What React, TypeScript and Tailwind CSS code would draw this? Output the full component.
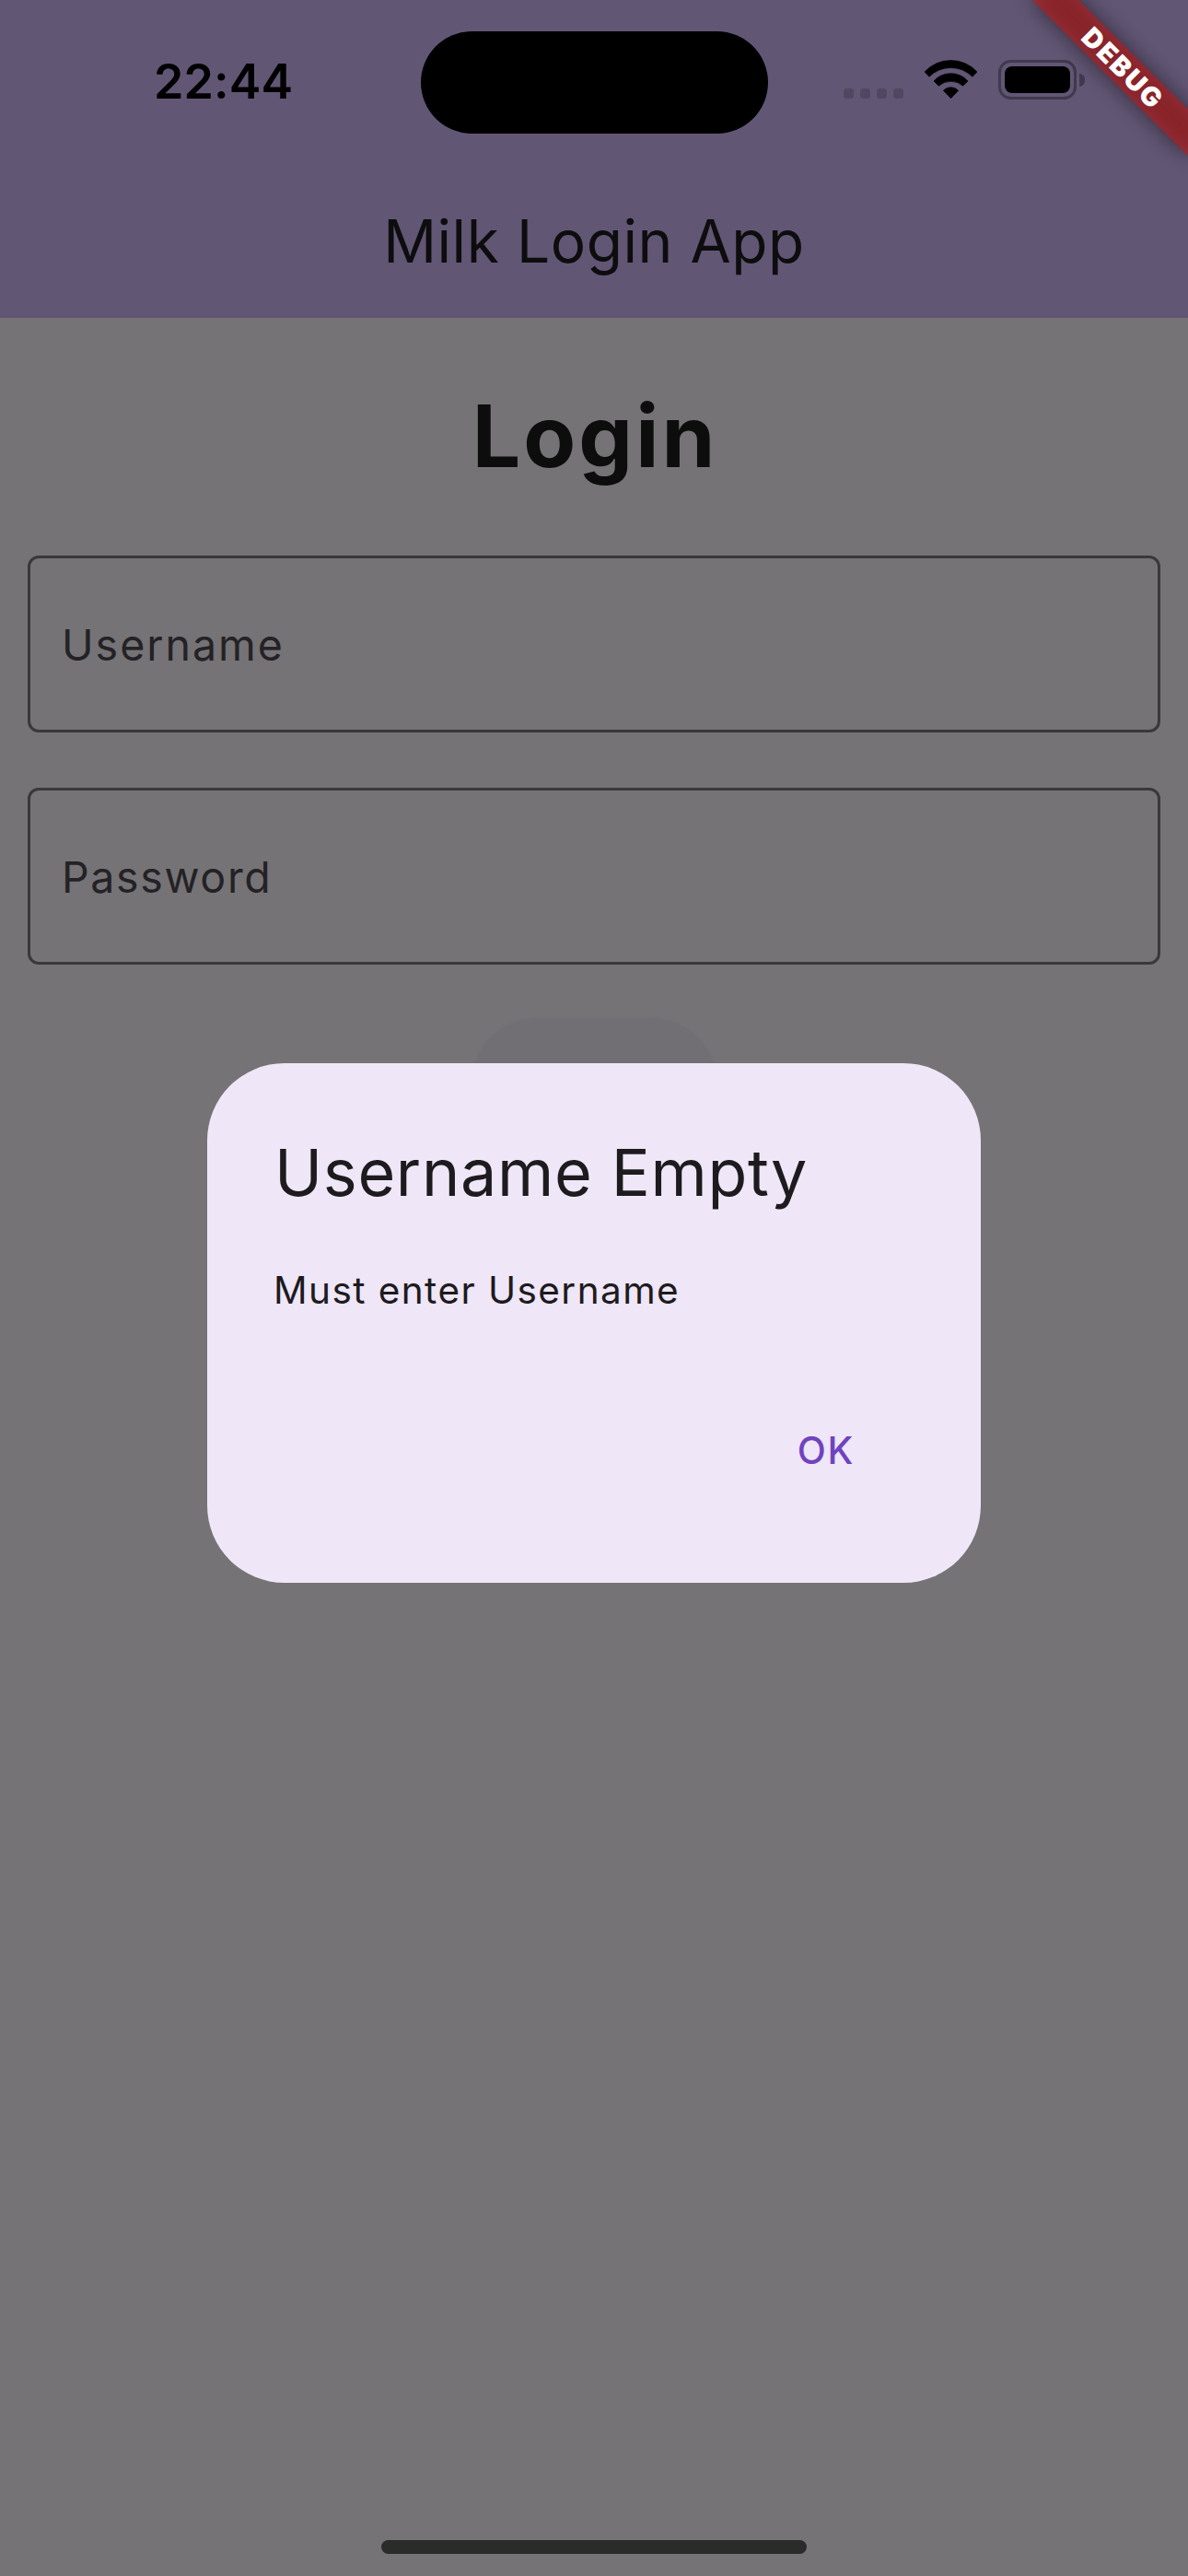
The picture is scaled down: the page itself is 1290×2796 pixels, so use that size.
function StatusBar() {
  return (
    <div className="flex h-[177px] items-start text-black">
      <div className="flex h-[177px] w-[457px] items-center pl-[167px] text-[52px] leading-none font-semibold tracking-[0.1px]">
        22:44
      </div>
      <div className="mt-[33.5px] h-[111px] w-[376.5px] rounded-[55.5px] bg-black" />
      <div className="flex pt-[65px] pl-[82.5px]">
        <div className="flex gap-[7px] pt-[31px]">
          <span className="size-[11px] rounded-[3.5px] bg-[#504861]" />
          <span className="size-[11px] rounded-[3.5px] bg-[#504861]" />
          <span className="size-[11px] rounded-[3.5px] bg-[#504861]" />
          <span className="size-[11px] rounded-[3.5px] bg-[#504861]" />
        </div>
        <svg
          className="ml-[22px] h-[43px] w-[59px]"
          viewBox="339 195 177 129"
          stroke="black"
          strokeWidth="2"
          strokeLinejoin="round"
        >
          <path d="M342 234A116 116 0 0 1 513 234L498 250A99 99 0 0 0 357 250Z" />
          <path d="M372 264A74 74 0 0 1 483 264L467 280A59 59 0 0 0 388 280Z" />
          <path d="M403 295A33 33 0 0 1 452 295L427.500 320Z" />
        </svg>
        <div className="ml-[22px] flex items-center">
          <div className="h-[43px] w-[85px] rounded-[13.5px] border-[3px] border-[#41394e] p-[4px]">
            <div className="h-[29px] w-[71px] rounded-[8px] bg-black" />
          </div>
          <div className="ml-[3px] h-[14px] w-[5.500px] rounded-r-[7px] bg-[#41394e]" />
        </div>
      </div>
    </div>
  );
}

function Field({ label, spacing }: { label: string; spacing: string }) {
  return (
    <div
      className={`flex h-[192px] items-center rounded-[12px] border-[3px] border-[#3a383b] px-[34px] pt-[2px] text-[46.5px] leading-none text-[#242226] ${spacing}`}
    >
      {label}
    </div>
  );
}

function DebugBanner() {
  return (
    <div className="absolute top-0 right-0 size-[210px] overflow-hidden">
      <div className="absolute top-[54px] left-[18px] h-[36px] w-[240px] rotate-45">
        <div className="absolute inset-0 bg-black/50 blur-[12px]" />
        <div className="absolute inset-0 flex items-center justify-center bg-[#b71c1c]/63 pl-[5px] text-[29px] leading-none font-black tracking-[2.1px] text-white">
          DEBUG
        </div>
      </div>
    </div>
  );
}

function AlertDialog() {
  return (
    <div className="absolute inset-0 flex items-center justify-center pt-[75px]">
      <div className="flex h-[564px] w-[840px] flex-col rounded-[84px] bg-[#efe6f7] p-[72px] text-[#1d1b1e]">
        <h2 className="pl-[1px] text-[70px] leading-[94px] tracking-[0.67px]">Username Empty</h2>
        <p className="mt-[51px] text-[40.5px] leading-[60px] tracking-[1.43px]">
          Must enter Username
        </p>
        <div className="mt-auto flex h-[141px] items-center justify-end">
          <button className="pr-[65px] text-[40.5px] leading-none font-medium tracking-[1.65px] text-[#6f43c0]">
            OK
          </button>
        </div>
      </div>
    </div>
  );
}

export default function App() {
  return (
    <div className="relative flex h-[2796px] w-[1290px] flex-col overflow-hidden bg-[#757375] font-['Inter',sans-serif]">
      <header className="h-[345px] bg-[#625675]">
        <StatusBar />
        <h1 className="flex h-[170px] items-center justify-center text-[64px] leading-none tracking-[0.58px] text-[#0d0d0e]">
          Milk Login App
        </h1>
      </header>
      <main className="flex flex-1 flex-col px-[30px]">
        <h2 className="flex h-[256px] items-center justify-center pl-[2px] text-[93px] leading-none font-bold tracking-[3.03px] text-[#0d0d0e]">
          Login
        </h2>
        <div className="mt-[2px] flex flex-col gap-[60px]">
          <Field label="Username" spacing="tracking-[2px]" />
          <Field label="Password" spacing="tracking-[1.65px]" />
        </div>
        <div className="mx-auto mt-[58px] h-[144px] w-[266px] rounded-full bg-[#716f74] shadow-[0_1px_3px_#6e6c6e]" />
      </main>
      <footer className="flex justify-center pb-[24px]">
        <div className="h-[15px] w-[462px] rounded-full bg-[#2b2b2b]" />
      </footer>
      <AlertDialog />
      <DebugBanner />
    </div>
  );
}
